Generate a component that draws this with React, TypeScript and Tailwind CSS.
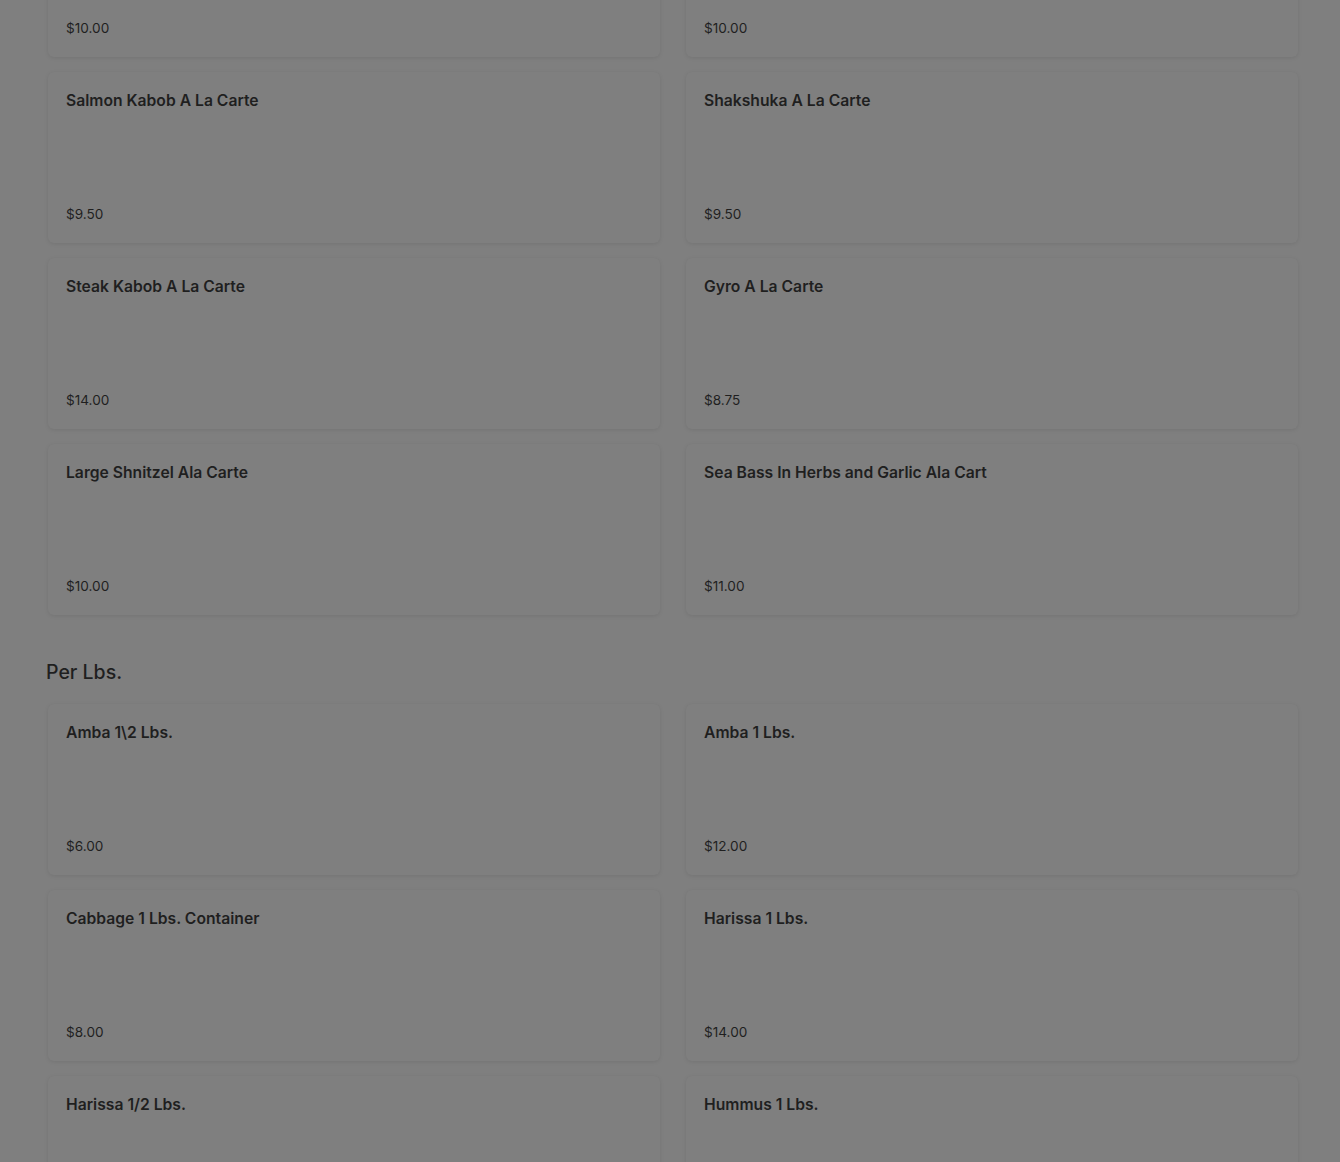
import React from "react";

type Item = { name: string; price: string };

const section1: Item[] = [
  { name: "", price: "$10.00" },
  { name: "", price: "$10.00" },
  { name: "Salmon Kabob A La Carte", price: "$9.50" },
  { name: "Shakshuka A La Carte", price: "$9.50" },
  { name: "Steak Kabob A La Carte", price: "$14.00" },
  { name: "Gyro A La Carte", price: "$8.75" },
  { name: "Large Shnitzel Ala Carte", price: "$10.00" },
  { name: "Sea Bass In Herbs and Garlic Ala Cart", price: "$11.00" },
];

const section2: Item[] = [
  { name: "Amba 1\\2 Lbs.", price: "$6.00" },
  { name: "Amba 1 Lbs.", price: "$12.00" },
  { name: "Cabbage 1 Lbs. Container", price: "$8.00" },
  { name: "Harissa 1 Lbs.", price: "$14.00" },
  { name: "Harissa 1/2 Lbs.", price: "" },
  { name: "Hummus 1 Lbs.", price: "" },
];

function Card({ item }: { item: Item }) {
  return (
    <div className="h-[171px] rounded-md bg-[#7f7f7f] shadow-[0_1px_4px_rgba(0,0,0,0.09)] px-[18px] pt-[21px] pb-[21px] flex flex-col justify-between">
      <div className="text-[15.7px] leading-[16px] font-semibold text-[#1f1f1f]">{item.name}</div>
      <div className="text-[13.6px] leading-[16px] text-[#1f1f1f]">{item.price}</div>
    </div>
  );
}

export default function App() {
  return (
    <div
      className="w-[1340px] h-[1162px] overflow-hidden bg-[#7f7f7f]"
      style={{ fontFamily: "Inter, 'Noto Sans', sans-serif" }}
    >
      <div className="pl-[48px] pr-[42px] -mt-[114px]">
        <div className="grid grid-cols-2 gap-x-[26px] gap-y-[15px]">
          {section1.map((it, i) => (
            <Card key={i} item={it} />
          ))}
        </div>
        <h2 className="-ml-[2px] mt-[43px] mb-[18px] text-[19.5px] leading-[28px] font-medium text-[#1f1f1f]">
          Per Lbs.
        </h2>
        <div className="grid grid-cols-2 gap-x-[26px] gap-y-[15px]">
          {section2.map((it, i) => (
            <Card key={i} item={it} />
          ))}
        </div>
      </div>
    </div>
  );
}
